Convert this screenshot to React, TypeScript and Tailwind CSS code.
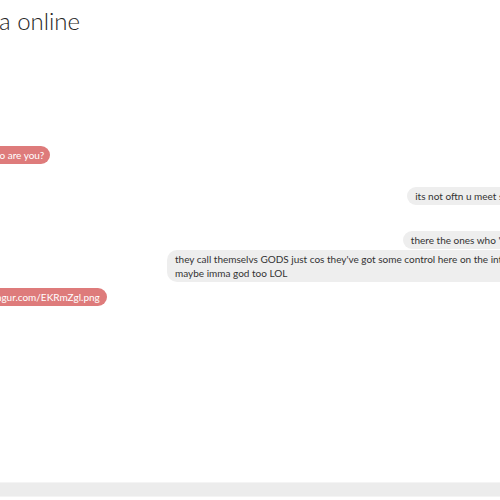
import React from "react";

const font = { fontFamily: '"Lato", "Noto Sans", sans-serif' };

export default function App() {
  return (
    <div className="w-[500px] h-[500px] overflow-hidden bg-white relative" style={font}>
      <div className="flex flex-col h-full">
        <div className="pt-[6px] h-[40px]">
          <h1 className="text-[24px] leading-[30px] text-[#262626] ml-[-1px]" style={{ fontWeight: 300 }}>
            a online
          </h1>
        </div>
        <div className="flex-1 flex flex-col ml-[-22px] w-[569px] text-[10px] leading-[14px]">
          <div className="mt-[106px] flex justify-start">
            <div className="bg-[#de7b7b] text-white rounded-full pl-[8px] pr-[6px] py-[2px]">who are you?</div>
          </div>
          <div className="mt-[23px] flex justify-end">
            <div className="bg-[#eeeeee] text-[#333] rounded-full px-[8px] py-[2px]">its not oftn u meet someone</div>
          </div>
          <div className="mt-[26px] flex justify-end">
            <div className="bg-[#eeeeee] text-[#333] rounded-full px-[8px] py-[2px]">there the ones who "run" this</div>
          </div>
          <div className="mt-[1px] flex justify-end">
            <div className="bg-[#eeeeee] text-[#333] rounded-[10px] px-[8px] py-[2px] max-w-[380px]">
              they call themselvs GODS just cos they've got some control here on the internet maybe imma god too LOL
            </div>
          </div>
          <div className="mt-[6px] flex justify-start">
            <div className="bg-[#de7b7b] text-white rounded-full pl-[8px] pr-[7px] py-[2px]">i.imgur.com/EKRmZgl.png</div>
          </div>
        </div>
        <div className="h-[15px] mb-[3px] bg-[#ececec] border-t border-b border-[#f4f4f4]" />
      </div>
    </div>
  );
}
